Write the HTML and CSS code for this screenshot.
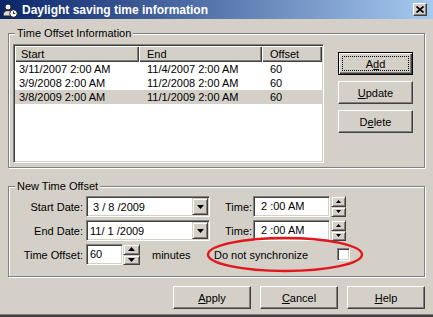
FILE: index.html
```html
<!DOCTYPE html>
<html lang="en">
<head>
    <meta charset="UTF-8">
    <title>Daylight saving time information</title>
    <link rel="stylesheet" href="styles.css">
</head>
<body>
    <div class="window">
        <div class="titlebar">
            <svg class="app-icon" width="16" height="16" viewBox="0 0 16 16">
                <path d="M1 14 Q1 8.5 6 8.5 Q11 8.5 11 14 Z" fill="#dcdcdc" stroke="#222" stroke-width="1"/>
                <circle cx="6" cy="5" r="3" fill="#f2f2f2" stroke="#222" stroke-width="1"/>
                <circle cx="11.5" cy="11.5" r="3.8" fill="#fff" stroke="#222" stroke-width="1"/>
                <path d="M11.5 9.5 V11.5 H13.3" fill="none" stroke="#222" stroke-width="1"/>
            </svg>
            <span class="title">Daylight saving time information</span>
            <button class="close-btn">
                <svg width="8" height="7" viewBox="0 0 8 7"><path d="M0.5 0.5 L7.5 6.5 M7.5 0.5 L0.5 6.5" stroke="#000" stroke-width="1.7"/></svg>
            </button>
        </div>

        <div class="client">
            <div class="group group-info">
                <span class="group-title">Time Offset Information</span>
                <div class="listview">
                    <div class="lv-header">
                        <span class="hd col-start">Start</span>
                        <span class="hd col-end">End</span>
                        <span class="hd col-offset">Offset</span>
                    </div>
                    <div class="lv-row">
                        <span class="col-start">3/11/2007 2:00 AM</span>
                        <span class="col-end">11/4/2007 2:00 AM</span>
                        <span class="col-offset">60</span>
                    </div>
                    <div class="lv-row">
                        <span class="col-start">3/9/2008 2:00 AM</span>
                        <span class="col-end">11/2/2008 2:00 AM</span>
                        <span class="col-offset">60</span>
                    </div>
                    <div class="lv-row selected">
                        <span class="col-start">3/8/2009 2:00 AM</span>
                        <span class="col-end">11/1/2009 2:00 AM</span>
                        <span class="col-offset">60</span>
                    </div>
                </div>
                <div class="side-buttons">
                    <button class="btn btn-default"><span class="focus-rect">A<u>d</u>d</span></button>
                    <button class="btn"><u>U</u>pdate</button>
                    <button class="btn">D<u>e</u>lete</button>
                </div>
            </div>

            <div class="group group-new">
                <span class="group-title">New Time Offset</span>
                <div class="form-row">
                    <label class="field-label">Start Date:</label>
                    <div class="combo sunken">
                        <span class="combo-text start">3 / 8 /2009</span>
                        <span class="combo-btn">
                            <svg width="7" height="4" viewBox="0 0 7 4"><polygon points="0,0 7,0 3.5,4" fill="#000"/></svg>
                        </span>
                    </div>
                    <label class="time-label">Time:</label>
                    <div class="time-field sunken">2 :00 AM</div>
                    <div class="spin-small">
                        <span class="spin-half"><svg width="5" height="3" viewBox="0 0 5 3"><polygon points="2.5,0 5,3 0,3" fill="#000"/></svg></span>
                        <span class="spin-half"><svg width="5" height="3" viewBox="0 0 5 3"><polygon points="0,0 5,0 2.5,3" fill="#000"/></svg></span>
                    </div>
                </div>
                <div class="form-row">
                    <label class="field-label">End Date:</label>
                    <div class="combo sunken">
                        <span class="combo-text">11/ 1 /2009</span>
                        <span class="combo-btn">
                            <svg width="7" height="4" viewBox="0 0 7 4"><polygon points="0,0 7,0 3.5,4" fill="#000"/></svg>
                        </span>
                    </div>
                    <label class="time-label">Time:</label>
                    <div class="time-field sunken">2 :00 AM</div>
                    <div class="spin-small">
                        <span class="spin-half"><svg width="5" height="3" viewBox="0 0 5 3"><polygon points="2.5,0 5,3 0,3" fill="#000"/></svg></span>
                        <span class="spin-half"><svg width="5" height="3" viewBox="0 0 5 3"><polygon points="0,0 5,0 2.5,3" fill="#000"/></svg></span>
                    </div>
                </div>
                <div class="form-row">
                    <label class="field-label">Time Offset:</label>
                    <div class="offset-field sunken">60</div>
                    <div class="spin-big">
                        <span class="spin-half"><svg width="7" height="4" viewBox="0 0 7 4"><polygon points="3.5,0 7,4 0,4" fill="#000"/></svg></span>
                        <span class="spin-half"><svg width="7" height="4" viewBox="0 0 7 4"><polygon points="0,0 7,0 3.5,4" fill="#000"/></svg></span>
                    </div>
                    <span class="unit">minutes</span>
                    <label class="sync-label">Do not synchronize</label>
                    <span class="checkbox sunken"></span>
                </div>
            </div>

            <div class="dialog-buttons">
                <button class="btn btn-wide"><u>A</u>pply</button>
                <button class="btn btn-wide"><u>C</u>ancel</button>
                <button class="btn btn-wide"><u>H</u>elp</button>
            </div>
        </div>

        <svg class="annotation" width="158" height="37" viewBox="0 0 158 37">
            <ellipse cx="79" cy="18.5" rx="77" ry="16.5" fill="none" stroke="#e3161c" stroke-width="2.4"/>
        </svg>
    </div>
</body>
</html>
```

FILE: styles.css
```css
* {
    box-sizing: border-box;
}

body {
    margin: 0;
    background-color: #d4d0c8;
    color: #000;
    font-family: 'Liberation Sans', Arial, sans-serif;
    font-size: 11px;
}

.window {
    position: relative;
    width: 433px;
    height: 317px;
    display: flex;
    flex-direction: column;
    box-shadow: inset 0 -2px #404040, inset 0 -3px #808080;
}

/* title bar */
.titlebar {
    height: 19px;
    display: flex;
    align-items: center;
    padding: 0 6px 0 2px;
    background: linear-gradient(to right, #0a246a, #a6caf0);
}

.app-icon {
    margin-right: 4px;
}

.title {
    color: #fff;
    font-weight: bold;
    font-size: 12px;
}

.close-btn {
    margin-left: auto;
    width: 14px;
    height: 13px;
    padding: 0;
    display: flex;
    align-items: center;
    justify-content: center;
    background-color: #d4d0c8;
    border: 1px solid;
    border-color: #fff #404040 #404040 #fff;
    box-shadow: inset -1px -1px #808080;
}

/* dialog body */
.client {
    display: flex;
    flex-direction: column;
    padding: 14px 8px 0 8px;
}

.group {
    position: relative;
    width: 417px;
    border: 1px solid #808080;
    box-shadow: inset 1px 1px #fff, 1px 1px #fff;
}

.group-title {
    position: absolute;
    top: -7px;
    left: 6px;
    padding: 0 2px;
    line-height: 13px;
    background-color: #d4d0c8;
}

.group-info {
    display: flex;
    align-items: flex-start;
    padding: 10px 0 4px 4px;
}

.group-new {
    margin-top: 18px;
    display: flex;
    flex-direction: column;
    gap: 3px;
    padding: 9px 0 11px 0;
}

/* list view */
.listview {
    width: 311px;
    height: 119px;
    padding: 1px;
    background-color: #fff;
    border: 1px solid;
    border-color: #808080 #fff #fff #808080;
    box-shadow: inset 1px 1px #404040, inset -1px -1px #d4d0c8;
}

.lv-header,
.lv-row {
    display: flex;
}

.lv-header .hd {
    height: 16px;
    line-height: 16px;
    background-color: #d4d0c8;
    box-shadow: inset 1px 1px #fff, inset -1px -1px #404040, inset -2px -2px #808080;
}

.lv-row {
    height: 14px;
    line-height: 14px;
}

.lv-row.selected {
    background-color: #d4d0c8;
}

.col-start {
    width: 124px;
    padding-left: 4px;
}

.col-end {
    width: 123px;
    padding-left: 8px;
}

.col-offset {
    width: 60px;
    padding-left: 8px;
}

.lv-header .col-start {
    padding-left: 6px;
}

/* buttons */
.btn {
    position: relative;
    width: 75px;
    height: 23px;
    padding: 0;
    font-family: inherit;
    font-size: 11px;
    color: #000;
    background-color: #d4d0c8;
    border: 1px solid;
    border-color: #fff #404040 #404040 #fff;
    box-shadow: inset -1px -1px #808080, inset 1px 1px #d4d0c8;
}

.btn-default {
    border-color: #000;
    box-shadow: inset 1px 1px #fff, inset -1px -1px #404040, inset -2px -2px #808080;
}

.focus-rect::after {
    content: '';
    position: absolute;
    left: 3px;
    right: 3px;
    top: 3px;
    bottom: 3px;
    border: 1px dotted #000;
}

.side-buttons {
    display: flex;
    flex-direction: column;
    gap: 6px;
    margin: 8px 0 0 14px;
}

.dialog-buttons {
    display: flex;
    justify-content: flex-end;
    gap: 9px;
    margin-top: 9px;
    width: 417px;
}

.btn-wide {
    width: 78px;
}

/* form controls */
.sunken {
    background-color: #fff;
    border: 1px solid;
    border-color: #808080 #fff #fff #808080;
    box-shadow: inset 1px 1px #404040, inset -1px -1px #d4d0c8;
}

.form-row {
    display: flex;
    align-items: center;
    height: 21px;
}

.field-label {
    width: 74px;
    margin-right: 3px;
    text-align: right;
}

.combo {
    display: flex;
    align-items: center;
    width: 124px;
    height: 21px;
    padding: 1px;
}

.combo-text {
    flex: 1;
    padding-left: 2px;
    white-space: pre;
}

.combo-text.start {
    padding-left: 5px;
}

.combo-btn {
    width: 16px;
    height: 17px;
    display: flex;
    align-items: center;
    justify-content: center;
    background-color: #d4d0c8;
    border: 1px solid;
    border-color: #d4d0c8 #404040 #404040 #d4d0c8;
    box-shadow: inset 1px 1px #fff, inset -1px -1px #808080;
}

.time-label {
    width: 28px;
    margin-left: 15px;
}

.time-field {
    width: 77px;
    height: 21px;
    line-height: 19px;
    padding-left: 7px;
}

.spin-small,
.spin-big {
    display: flex;
    flex-direction: column;
    height: 21px;
}

.spin-small {
    width: 15px;
    margin-left: 1px;
}

.spin-big {
    width: 17px;
}

.spin-half {
    flex: 1;
    display: flex;
    align-items: center;
    justify-content: center;
    background-color: #d4d0c8;
    border: 1px solid;
    border-color: #d4d0c8 #404040 #404040 #d4d0c8;
    box-shadow: inset 1px 1px #fff, inset -1px -1px #808080;
}

.offset-field {
    width: 37px;
    height: 21px;
    line-height: 19px;
    padding-left: 3px;
}

.unit {
    width: 62px;
    margin-left: 12px;
}

.sync-label {
    width: 123px;
}

.checkbox {
    width: 13px;
    height: 13px;
}

/* red marker drawn over the screenshot */
.annotation {
    position: absolute;
    left: 206px;
    top: 236px;
}
```
